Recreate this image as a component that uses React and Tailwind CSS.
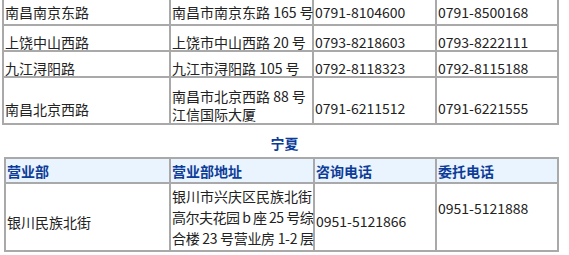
import React from "react";

const jiangxi = [
  { name: '南昌南京东路', addr: ['南昌市南京东路 165 号'], tel: '0791-8104600', trust: '0791-8500168', h: 'h-[26px]', pt: 'pt-[4px]', pt1: 'pt-[4px]', pt2: 'pt-[4px]' },
  { name: '上饶中山西路', addr: ['上饶市中山西路 20 号'], tel: '0793-8218603', trust: '0793-8222111', h: 'h-[26px]', pt: 'pt-[8px]', pt1: 'pt-[8px]', pt2: 'pt-[8px]' },
  { name: '九江浔阳路', addr: ['九江市浔阳路 105 号'], tel: '0792-8118323', trust: '0792-8115188', h: 'h-[26px]', pt: 'pt-[8px]', pt1: 'pt-[8px]', pt2: 'pt-[8px]' },
  { name: '南昌北京西路', addr: ['南昌市北京西路 88 号', '江信国际大厦'], tel: '0791-6211512', trust: '0791-6221555', h: 'h-[47px]', pt: 'pt-[22px]', pt1: 'pt-[23px]', pt2: 'pt-[9px]' },
];

const cell = "border border-[#a9a9a9] align-top text-left whitespace-nowrap p-0 pl-[1px] leading-[16px]";

export default function App() {
  return (
    <div className="w-[569px] h-[255px] overflow-hidden bg-white text-[14px] text-[#222] font-['Noto_Sans_CJK_SC',sans-serif]">
      <table className="-mt-[2px] ml-[2px] w-[557px] table-fixed border-separate border-spacing-0 border border-[#a9a9a9]">
        <tbody>
          {jiangxi.map((r, i) => (
            <tr key={i} className={r.h}>
              <td className={`${cell} w-[167px] ${r.pt1}`}>{r.name}</td>
              <td className={`${cell} w-[143px] ${r.pt2} ${r.addr.length > 1 ? 'leading-[18px]' : ''}`}>
                {r.addr.map((a, j) => <div key={j}>{a}</div>)}
              </td>
              <td className={`${cell} w-[123px] ${r.pt}`}>{r.tel}</td>
              <td className={`${cell} w-[122px] ${r.pt} pl-0`}>{r.trust}</td>
            </tr>
          ))}
        </tbody>
      </table>

      <div className="h-[32px] pt-[10px] text-center leading-[16px] font-bold text-[#0d3c98]">宁夏</div>

      <table className="ml-[4px] w-[555px] table-fixed border-separate border-spacing-0 border border-[#a9a9a9]">
        <tbody>
          <tr className="h-[25px] bg-[#eaf4fe] font-bold text-[#0d3c98]">
            <td className={`${cell} w-[165px] pt-[4px]`}>营业部</td>
            <td className={`${cell} w-[144px] pt-[4px]`}>营业部地址</td>
            <td className={`${cell} w-[122px] pt-[4px] pl-0`}>咨询电话</td>
            <td className={`${cell} w-[122px] pt-[4px] pl-0`}>委托电话</td>
          </tr>
          <tr className="h-[68px]">
            <td className={`${cell} pt-[30px]`}>银川民族北街</td>
            <td className={`${cell} pt-[2px] leading-[21px]`}>
              <div>银川市兴庆区民族北街</div>
              <div className="tracking-[-0.5px]">高尔夫花园 b 座 25 号综</div>
              <div className="tracking-[-0.3px]">合楼 23 号营业房 1-2 层</div>
            </td>
            <td className={`${cell} pt-[29px] pl-0`}>0951-5121866</td>
            <td className={`${cell} pt-[16px] pl-0`}>0951-5121888</td>
          </tr>
        </tbody>
      </table>
    </div>
  );
}
